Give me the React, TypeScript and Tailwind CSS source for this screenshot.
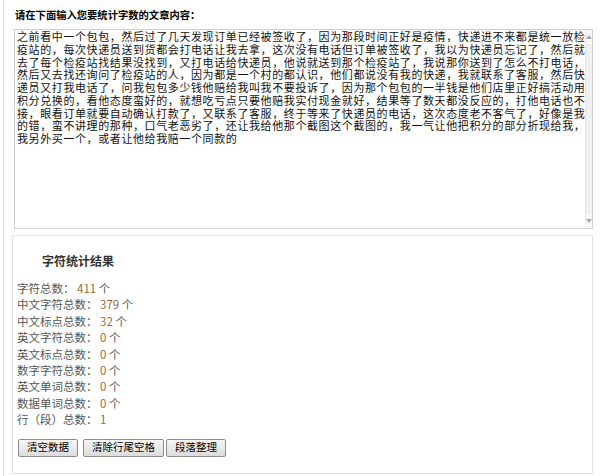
const lines = [
  "之前看中一个包包，然后过了几天发现订单已经被签收了，因为那段时间正好是疫情，快递进不来都是统一放检",
  "疫站的，每次快递员送到货都会打电话让我去拿，这次没有电话但订单被签收了，我以为快递员忘记了，然后就",
  "去了每个检疫站找结果没找到，又打电话给快递员，他说就送到那个检疫站了，我说那你送到了怎么不打电话，",
  "然后又去找还询问了检疫站的人，因为都是一个村的都认识，他们都说没有我的快递，我就联系了客服，然后快",
  "递员又打我电话了，问我包包多少钱他赔给我叫我不要投诉了，因为那个包包的一半钱是他们店里正好搞活动用",
  "积分兑换的，看他态度蛮好的，就想吃亏点只要他赔我实付现金就好，结果等了数天都没反应的，打他电话也不",
  "接，眼看订单就要自动确认打款了，又联系了客服，终于等来了快递员的电话，这次态度老不客气了，好像是我",
  "的错，蛮不讲理的那种，口气老恶劣了，还让我给他那个截图这个截图的，我一气让他把积分的部分折现给我，",
  "我另外买一个，或者让他给我赔一个同款的",
]

const stats: [string, string, string][] = [
  ["字符总数：", "411", "个"],
  ["中文字符总数：", "379", "个"],
  ["中文标点总数：", "32", "个"],
  ["英文字符总数：", "0", "个"],
  ["英文标点总数：", "0", "个"],
  ["数字字符总数：", "0", "个"],
  ["英文单词总数：", "0", "个"],
  ["数据单词总数：", "0", "个"],
  ["行（段）总数：", "1", ""],
]

function Btn({ label, className = "" }: { label: string; className?: string }) {
  return (
    <button
      className={
        "h-[18px] px-[8px] border border-[#8a8a8a] rounded-[2px] bg-gradient-to-b from-[#f6f6f6] to-[#dcdcdc] text-[10.5px] leading-none text-black " +
        className
      }
    >
      {label}
    </button>
  )
}

export default function App() {
  return (
    <div className="h-[476px] bg-white pl-[3px] font-['Noto_Sans_CJK_SC',sans-serif] overflow-hidden">
      <div className="h-full border-l border-[#d6e6f6] pl-[8px] pr-[7px] pt-[8px]">
        {/* heading */}
        <div className="pl-[3px] text-[10.3px] leading-[14px] font-bold text-black">
          请在下面输入您要统计字数的文章内容：
        </div>

        {/* textarea */}
        <div className="mt-[7px] ml-[2px] h-[200px] flex border border-[#cfcfcf] bg-white">
          <div className="flex-1 pl-[2px] text-[11px] tracking-[0.6px] leading-[12.75px] text-[#111]">
            {lines.map((l, i) => (
              <div key={i} className="whitespace-nowrap">
                {l}
              </div>
            ))}
          </div>
          <div className="w-[13px] flex flex-col bg-[#f0f0f0] border-l border-[#e6e6e6]">
            <div className="h-[14px] flex items-center justify-center bg-[#f7f7f7]">
              <svg width="6" height="4" viewBox="0 0 6 4">
                <path d="M0 4 L3 0 L6 4 Z" fill="#a8a8a8" />
              </svg>
            </div>
            <div className="flex-1" />
            <div className="h-[14px] flex items-center justify-center bg-[#f7f7f7]">
              <svg width="6" height="4" viewBox="0 0 6 4">
                <path d="M0 0 L3 4 L6 0 Z" fill="#a8a8a8" />
              </svg>
            </div>
          </div>
        </div>

        {/* result */}
        <div className="mt-[6px] h-[239px] border border-[#e2e2e2] pt-[17px] pl-[4px]">
          <div className="pl-[25px] text-[12px] leading-[16px] font-bold text-[#333]">字符统计结果</div>
          <div className="mt-[11px] text-[11.5px] leading-[16.4px] text-[#555]">
            {stats.map(([k, v, u]) => (
              <div key={k}>
                {k} <span className="text-[#9a6a3c]">{v}</span>
                {u && " " + u}
              </div>
            ))}
          </div>
          <div className="mt-[11px] flex pl-[1px]">
            <Btn label="清空数据" className="mr-[5px]" />
            <Btn label="清除行尾空格" className="mr-[2px]" />
            <Btn label="段落整理" />
          </div>
        </div>
      </div>
    </div>
  )
}
